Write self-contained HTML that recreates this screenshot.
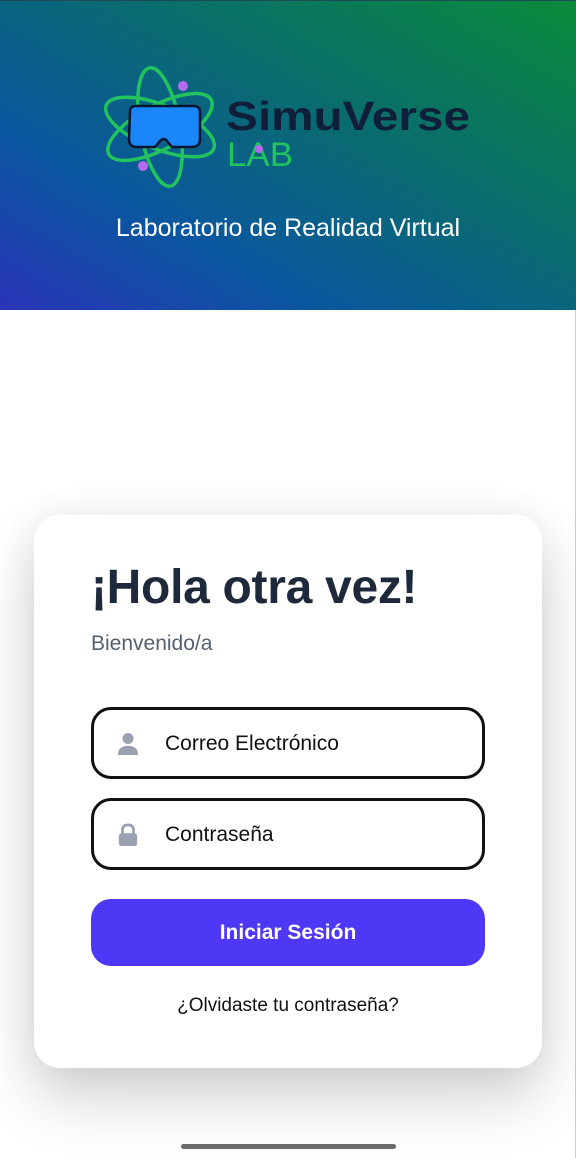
<!DOCTYPE html>
<html><head><meta charset="utf-8"><style>
*{margin:0;padding:0;box-sizing:border-box}
body{width:576px;height:1158px;background:#fff;font-family:"Liberation Sans",Roboto,sans-serif;position:relative;overflow:hidden}
.hdr{position:absolute;left:0;top:0;width:576px;height:310px;background:linear-gradient(30deg,#2a34b8 0%,#0a56a0 28%,#0a6a72 58%,#0a8a3a 100%);border-top:1px solid #1e4a55}
.sub{position:absolute;top:213px;left:0;width:576px;text-align:center;color:#fff;font-size:25px}
.card{position:absolute;left:34px;top:515px;width:508px;height:553px;background:#fff;border-radius:26px;box-shadow:0 30px 60px rgba(0,0,0,.18),0 0 40px rgba(0,0,0,.06)}
h1{position:absolute;left:57px;top:45px;font-size:48px;font-weight:bold;color:#1e293b;letter-spacing:-0.3px}
.bv{position:absolute;left:57px;top:117px;font-size:21px;color:#556070}
.inp{position:absolute;left:57px;width:394px;height:72px;border:3px solid #111;border-radius:20px}
.inp span{position:absolute;left:71px;top:22px;font-size:21px;color:#111}
.inp svg{position:absolute;left:23px;top:22px}
.btn{position:absolute;left:57px;top:384px;width:394px;height:67px;background:#4f38f5;border-radius:20px;color:#fff;font-weight:bold;font-size:21px;text-align:center;line-height:67px}
.fg{position:absolute;left:0;top:480px;width:508px;text-align:center;font-size:19px;color:#111}
.bar{position:absolute;left:181px;top:1144px;width:215px;height:5px;border-radius:3px;background:#6a6a6a}
.rb{position:absolute;right:0;top:310px;width:1px;height:848px;background:#ccc}
</style></head><body>
<div class="hdr">
<svg width="576" height="210" style="position:absolute;left:0;top:0">
<g fill="none" stroke="#22c25e" stroke-width="3.5">
<ellipse cx="160" cy="126" rx="58" ry="22" transform="rotate(22 160 126)"/>
<ellipse cx="160" cy="126" rx="58" ry="22" transform="rotate(-28 160 126)"/>
<ellipse cx="160" cy="126" rx="60" ry="20" transform="rotate(80 160 126)"/>
</g>
<path d="M130 110 Q130 105 136 105 L194 105 Q200 105 200 111 L200 138 Q200 146 192 146 L172 146 L167 140 Q164 136 160 140 L155 146 L137 146 Q129 146 129 138 Z" fill="#1a86f8" stroke="#0a1530" stroke-width="2.5"/>
<circle cx="183" cy="85" r="5" fill="#b46af0"/>
<circle cx="143" cy="165" r="5" fill="#b46af0"/>
<text x="226" y="129" font-family="Liberation Sans,sans-serif" font-weight="bold" font-size="41" fill="#0f1f3a" textLength="244" lengthAdjust="spacingAndGlyphs">SimuVerse</text>
<text x="227" y="165" font-family="Liberation Sans,sans-serif" font-size="34" fill="#22c25e" textLength="66" lengthAdjust="spacingAndGlyphs">LAB</text>
<circle cx="259" cy="148" r="4" fill="#b46af0"/>
</svg>
<div class="sub">Laboratorio de Realidad Virtual</div>
</div>
<div class="rb"></div>
<div class="card">
<h1>¡Hola otra vez!</h1>
<div class="bv">Bienvenido/a</div>
<div class="inp" style="top:192px"><svg width="22" height="24" viewBox="0 0 24 26"><circle cx="12" cy="7" r="6" fill="#9aa2b1"/><path d="M1 25 Q1 15 12 15 Q23 15 23 25 Z" fill="#9aa2b1"/></svg><span>Correo Electrónico</span></div>
<div class="inp" style="top:283px"><svg width="22" height="24" viewBox="0 0 24 26"><path d="M6 12 V8 Q6 2 12 2 Q18 2 18 8 V12" fill="none" stroke="#9aa2b1" stroke-width="3"/><rect x="2" y="11" width="20" height="14" rx="3" fill="#9aa2b1"/></svg><span>Contraseña</span></div>
<div class="btn">Iniciar Sesión</div>
<div class="fg">¿Olvidaste tu contraseña?</div>
</div>
<div class="bar"></div>
</body></html>
